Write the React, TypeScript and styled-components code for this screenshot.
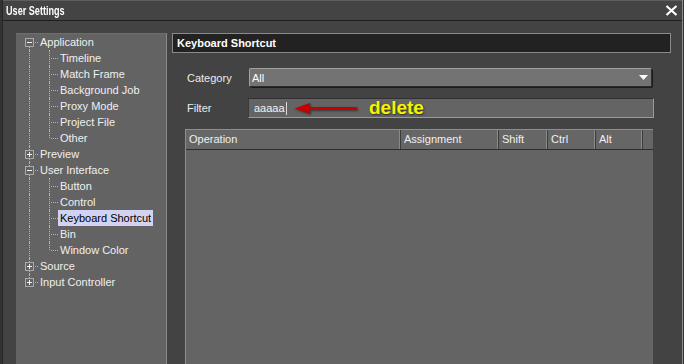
import React, { FC } from "react";
import styled, { createGlobalStyle } from "styled-components";

const GlobalStyle = createGlobalStyle`
  html, body {
    margin: 0;
    padding: 0;
    background: #333;
    overflow: hidden;
  }
  body {
    font-family: "Liberation Sans", Arial, sans-serif;
    font-size: 11px;
    color: #eee;
  }
`;

type Line = "none" | "full" | "first" | "last";

interface TreeNode {
  label: string;
  open?: boolean;
  children?: string[];
}

const tree: TreeNode[] = [
  {
    label: "Application",
    open: true,
    children: ["Timeline", "Match Frame", "Background Job", "Proxy Mode", "Project File", "Other"],
  },
  { label: "Preview" },
  {
    label: "User Interface",
    open: true,
    children: ["Button", "Control", "Keyboard Shortcut", "Bin", "Window Color"],
  },
  { label: "Source" },
  { label: "Input Controller" },
];

const columns = [
  { title: "Operation", width: 215 },
  { title: "Assignment", width: 98 },
  { title: "Shift", width: 49 },
  { title: "Ctrl", width: 48 },
  { title: "Alt", width: 47 },
];

const SELECTED = "Keyboard Shortcut";

const Expander: FC<{ open?: boolean }> = ({ open }) => (
  <ExpanderBox width="9" height="9" viewBox="0 0 9 9">
    <rect x="0.5" y="0.5" width="8" height="8" fill="#636363" stroke="#a9a9a9" />
    <line x1="2" y1="4.5" x2="7" y2="4.5" stroke="#f2f2f2" />
    {!open && <line x1="4.5" y1="2" x2="4.5" y2="7" stroke="#f2f2f2" />}
  </ExpanderBox>
);

const SettingsTree: FC = () => (
  <TreePanel>
    {tree.map((node, i) => {
      const topLine: Line =
        i === 0 ? "first" : i === tree.length - 1 ? "last" : "full";
      return (
        <React.Fragment key={node.label}>
          <Row>
            <Guide $w={18} $line={topLine} $branch>
              <Expander open={node.open} />
            </Guide>
            <Label $selected={node.label === SELECTED}>{node.label}</Label>
          </Row>
          {node.open &&
            node.children?.map((child, j) => (
              <Row key={child}>
                <Guide $w={20} $line={i === tree.length - 1 ? "none" : "full"} />
                <Guide
                  $w={18}
                  $line={j === node.children!.length - 1 ? "last" : "full"}
                  $branch
                />
                <Label $selected={child === SELECTED}>{child}</Label>
              </Row>
            ))}
        </React.Fragment>
      );
    })}
  </TreePanel>
);

const App: FC = () => {
  return (
    <>
      <GlobalStyle />
      <Window>
        <TitleBar>
          <Title>User Settings</Title>
          <CloseButton width="13" height="11" viewBox="0 0 13 11">
            <path d="M1.5 1 L11.5 10 M11.5 1 L1.5 10" stroke="#fff" strokeWidth="2.2" />
          </CloseButton>
        </TitleBar>
        <Body>
          <SettingsTree />
          <Content>
            <SectionHeader>Keyboard Shortcut</SectionHeader>
            <Form>
              <FieldRow>
                <FieldLabel $w={64}>Category</FieldLabel>
                <Combo>
                  <span>All</span>
                  <svg width="9" height="5" viewBox="0 0 9 5">
                    <path d="M0 0 H9 L4.5 5 Z" fill="#fff" />
                  </svg>
                </Combo>
              </FieldRow>
              <FieldRow $top={10}>
                <FieldLabel $w={63}>Filter</FieldLabel>
                <FilterInput>
                  <span>aaaaa</span>
                  <Caret />
                  <Annotation>
                    <svg width="66" height="13" viewBox="0 0 66 13">
                      <path d="M0.5 6.5 L16 1 V5 H63 V8 H16 V12 Z" fill="#c40000" />
                    </svg>
                    <Note>delete</Note>
                  </Annotation>
                </FilterInput>
              </FieldRow>
              <Table>
                <HeaderRow>
                  {columns.map((c) => (
                    <HeaderCell key={c.title} style={{ width: c.width }}>
                      {c.title}
                    </HeaderCell>
                  ))}
                  <HeaderFill />
                </HeaderRow>
              </Table>
            </Form>
          </Content>
        </Body>
      </Window>
    </>
  );
};

export default App;

const Window = styled.div`
  width: 679px;
  height: 364px;
  margin-left: 2px;
  border-left: 1px solid #262626;
  border-right: 1px solid #8c8c8c;
  background: #434343;
  display: flex;
  flex-direction: column;
  overflow: hidden;
`;

const TitleBar = styled.div`
  height: 19px;
  flex: none;
  border-top: 1px solid #5e5e5e;
  border-bottom: 1px solid #1e1e1e;
  background: #444;
  display: flex;
  align-items: center;
  justify-content: space-between;
  padding: 0 4px 0 3px;
`;

const Title = styled.span`
  font-family: "Liberation Sans", Arial, sans-serif;
  font-weight: bold;
  font-size: 13px;
  color: #fff;
  display: inline-block;
  transform: scaleX(0.7);
  transform-origin: left center;
`;

const CloseButton = styled.svg`
  display: block;
`;

const Body = styled.div`
  flex: 1;
  display: flex;
  gap: 5px;
  padding: 12px 11px 0 13px;
  min-height: 0;
`;

const TreePanel = styled.div`
  flex: none;
  width: 151px;
  box-sizing: border-box;
  background: #636363;
  border-top: 1px solid #6e6e6e;
  border-right: 1px solid #8a8a8a;
  padding: 0 0 0 4px;
`;

const Row = styled.div`
  display: flex;
  align-items: center;
  height: 16px;
`;

const Guide = styled.span<{ $w: number; $line: Line; $branch?: boolean }>`
  position: relative;
  flex: none;
  width: ${(p) => p.$w}px;
  height: 16px;
  &::before {
    content: "";
    position: absolute;
    left: 9px;
    top: ${(p) => (p.$line === "first" ? "8px" : "0")};
    bottom: ${(p) => (p.$line === "last" ? "8px" : "0")};
    border-left: 1px dotted #b4b4b4;
    display: ${(p) => (p.$line === "none" ? "none" : "block")};
  }
  &::after {
    content: "";
    position: absolute;
    left: 11px;
    right: 0;
    top: 8px;
    border-top: 1px dotted #b4b4b4;
    display: ${(p) => (p.$branch ? "block" : "none")};
  }
`;

const ExpanderBox = styled.svg`
  position: absolute;
  left: 5px;
  top: 4px;
  z-index: 1;
`;

const Label = styled.span<{ $selected?: boolean }>`
  padding: 0 2px;
  height: 16px;
  line-height: 16px;
  white-space: nowrap;
  color: ${(p) => (p.$selected ? "#000" : "#f0f0f0")};
  background: ${(p) => (p.$selected ? "#d2d2f2" : "transparent")};
`;

const Content = styled.div`
  flex: 1;
  display: flex;
  flex-direction: column;
  min-width: 0;
`;

const SectionHeader = styled.div`
  height: 18px;
  flex: none;
  background: #222;
  border: 1px solid #8a8a8a;
  padding-left: 4px;
  line-height: 18px;
  font-weight: bold;
  font-size: 11px;
  color: #fff;
`;

const Form = styled.div`
  flex: 1;
  display: flex;
  flex-direction: column;
  margin: 15px 17px 0 13px;
  min-height: 0;
`;

const FieldRow = styled.div<{ $top?: number }>`
  display: flex;
  align-items: center;
  height: 20px;
  margin-top: ${(p) => p.$top ?? 0}px;
  position: relative;
`;

const FieldLabel = styled.span<{ $w: number }>`
  width: ${(p) => p.$w}px;
  flex: none;
  padding-left: 2px;
  box-sizing: border-box;
  color: #ececec;
`;

const Combo = styled.div`
  flex: 1;
  height: 17px;
  margin: 0 2px 1px 0;
  display: flex;
  align-items: center;
  justify-content: space-between;
  padding: 0 2px 0 2px;
  background: #737373;
  border: 1px solid;
  border-color: #a2a2a2 #2c2c2c #2c2c2c #a2a2a2;
  border-radius: 2px;
  box-shadow: 1px 1px 0 #1c1c1c;
  color: #fff;
  svg {
    margin-right: 1px;
  }
`;

const FilterInput = styled.div`
  flex: 1;
  height: 18px;
  display: flex;
  align-items: center;
  padding-left: 5px;
  background: #646464;
  border: 1px solid;
  border-color: #303030 #999 #9c9c9c #3a3a3a;
  color: #f4f4f4;
  position: relative;
`;

const Caret = styled.span`
  width: 1px;
  height: 13px;
  margin-left: 1px;
  background: #d8d8d8;
`;

const Annotation = styled.div`
  position: absolute;
  left: 45px;
  top: -2px;
  display: flex;
  align-items: center;
  gap: 9px;
  svg {
    filter: drop-shadow(1px 1px 1px rgba(0, 0, 0, 0.45));
  }
`;

const Note = styled.span`
  font-family: "Liberation Sans", Arial, sans-serif;
  font-weight: bold;
  font-size: 19px;
  color: #f4f400;
  text-shadow: 1px 1px 2px rgba(0, 0, 0, 0.55);
`;

const Table = styled.div`
  flex: 1;
  margin: 11px 1px 0 0;
  background: #646464;
  border-top: 1px solid #8e8e8e;
  border-left: 1px solid #8e8e8e;
`;

const HeaderRow = styled.div`
  display: flex;
  height: 19px;
  border-bottom: 1px solid #2e2e2e;
  background: #666;
`;

const HeaderCell = styled.div`
  flex: none;
  box-sizing: border-box;
  padding-left: 3px;
  line-height: 19px;
  color: #f0f0f0;
  border-right: 1px solid #3c3c3c;
  box-shadow: inset -2px 0 0 -1px #8a8a8a;
  white-space: nowrap;
  overflow: hidden;
`;

const HeaderFill = styled.div`
  flex: 1;
`;
